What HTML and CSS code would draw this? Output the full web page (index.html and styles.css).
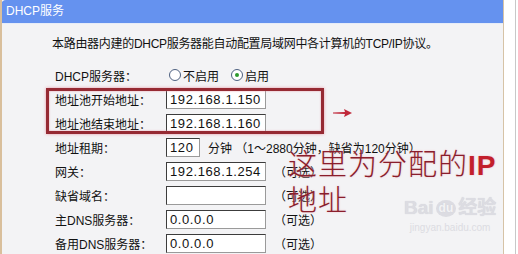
FILE: index.html
```html
<!DOCTYPE html>
<html lang="zh-CN">
<head>
    <meta charset="UTF-8">
    <title>DHCP服务</title>
    <link rel="stylesheet" href="styles.css">
</head>
<body>
    <div class="frame">
        <div class="head">DHCP服务</div>
        <p class="desc">本路由器内建的DHCP服务器能自动配置局域网中各计算机的TCP/IP协议。</p>
        <div class="form">
            <div class="row">
                <label>DHCP服务器：</label>
                <span class="opt"><span class="radio"></span>不启用</span>
                <span class="opt"><span class="radio on"></span>启用</span>
            </div>
            <div class="row">
                <label>地址池开始地址：</label>
                <span class="field">192.168.1.150</span>
            </div>
            <div class="row">
                <label>地址池结束地址：</label>
                <span class="field">192.168.1.160</span>
            </div>
            <div class="row">
                <label>地址租期：</label>
                <span class="field short">120</span>
                <span class="note">分钟 （1～2880分钟，缺省为120分钟）</span>
            </div>
            <div class="row">
                <label>网关：</label>
                <span class="field">192.168.1.254</span>
                <span class="note">（可选）</span>
            </div>
            <div class="row">
                <label>缺省域名：</label>
                <span class="field"></span>
                <span class="note">（可选）</span>
            </div>
            <div class="row">
                <label>主DNS服务器：</label>
                <span class="field">0.0.0.0</span>
                <span class="note">（可选）</span>
            </div>
            <div class="row">
                <label>备用DNS服务器：</label>
                <span class="field">0.0.0.0</span>
                <span class="note">（可选）</span>
            </div>
        </div>

        <!-- annotation drawn on top of the screenshot -->
        <div class="mark-box"></div>
        <svg class="mark-arrow" width="20" height="8" viewBox="0 0 20 8">
            <path d="M0 3.5 L12 3 L11 0 L19 4 L11 8 L12 5 L0 4.5 Z" fill="#c0283a"/>
        </svg>
        <div class="mark-text">这里为分配的<b>IP</b><br>地址</div>

        <div class="watermark">
            <div class="wm-logo">Bai<span class="paw">du</span>经验</div>
            <div class="wm-url">jingyan.baidu.com</div>
        </div>
    </div>
    <div class="edge"></div>
</body>
</html>
```

FILE: styles.css
```css
body {
    margin: 0;
    background: #ffffff;
    font-family: "Liberation Sans", "Noto Sans CJK SC", sans-serif;
    font-size: 12px;
    color: #111;
}
.frame {
    position: relative;
    width: 501px;
    height: 254px;
    background: #f3f3f5;
    border-left: 2px solid #d9bf9c;
    border-right: 1px solid #d6c3a6;
    overflow: hidden;
}
.edge {
    position: absolute;
    top: 0;
    left: 515px;
    width: 1px;
    height: 254px;
    background: #c8c8c8;
}
.head {
    height: 23px;
    line-height: 23px;
    background: #6592ef;
    color: #fff;
    padding-left: 5px;
    border-radius: 5px 0 0 0;
    border-bottom: 1px solid #e6ecf8;
    margin-left: -1px;
}
.desc {
    margin: 12px 0 0 50px;
    line-height: 16px;
    letter-spacing: -0.3px;
}
.form {
    margin-top: 11px;
}
.row {
    display: flex;
    align-items: center;
    height: 24px;
    padding-left: 53px;
}
.row label {
    width: 111px;
}
.opt {
    display: flex;
    align-items: center;
    gap: 2px;
    margin-right: 9px;
    margin-left: 3px;
}
.radio {
    width: 10px;
    height: 10px;
    border: 1px solid #4d6080;
    border-radius: 50%;
    background: #fff;
    position: relative;
}
.radio.on::after {
    content: "";
    position: absolute;
    left: 3px;
    top: 3px;
    width: 4px;
    height: 4px;
    border-radius: 50%;
    background: #2d9a2d;
}
.field {
    box-sizing: border-box;
    width: 100px;
    height: 19px;
    line-height: 17px;
    padding-left: 3px;
    background: #fff;
    border: 1px solid #3c3c3c;
    border-right-color: #9a9a9a;
    border-bottom-color: #9a9a9a;
    font-family: "Liberation Sans", sans-serif;
    font-size: 13px;
    letter-spacing: 0.6px;
}
.field.short {
    width: 34px;
}
.note {
    margin-left: 8px;
}
.mark-box {
    position: absolute;
    left: 44px;
    top: 88px;
    width: 272px;
    height: 40px;
    border: 3px solid #962a33;
    box-shadow: 0 0 3px #e89aa6, inset 0 0 2px #e89aa6;
}
.mark-arrow {
    position: absolute;
    left: 331px;
    top: 109px;
}
.mark-text {
    position: absolute;
    left: 286px;
    top: 146px;
    font-family: "Noto Sans CJK SC", sans-serif;
    font-weight: 300;
    font-size: 29px;
    line-height: 33px;
    color: #8a1e2c;
    text-shadow: 0 0 2px #f0b8c0;
    letter-spacing: 1px;
}
.mark-text b {
    font-family: "Liberation Sans", sans-serif;
    font-weight: bold;
    color: #c21f2c;
    font-size: 28px;
}
.watermark {
    position: absolute;
    left: 402px;
    top: 196px;
    color: #dcdce2;
    white-space: nowrap;
    text-align: center;
}
.wm-logo {
    font-family: "Liberation Sans", "Noto Sans CJK SC", sans-serif;
    font-weight: bold;
    font-size: 19px;
    line-height: 24px;
    text-shadow: 0 0 1px #cfcfd6;
}
.paw {
    font-size: 12px;
    display: inline-block;
    border-radius: 50%;
    background: #dcdce2;
    color: #f3f3f5;
    padding: 2px 3px;
    margin: 0 2px;
    line-height: 13px;
    vertical-align: 2px;
}
.wm-url {
    font-size: 10px;
    margin-top: 2px;
}
```
